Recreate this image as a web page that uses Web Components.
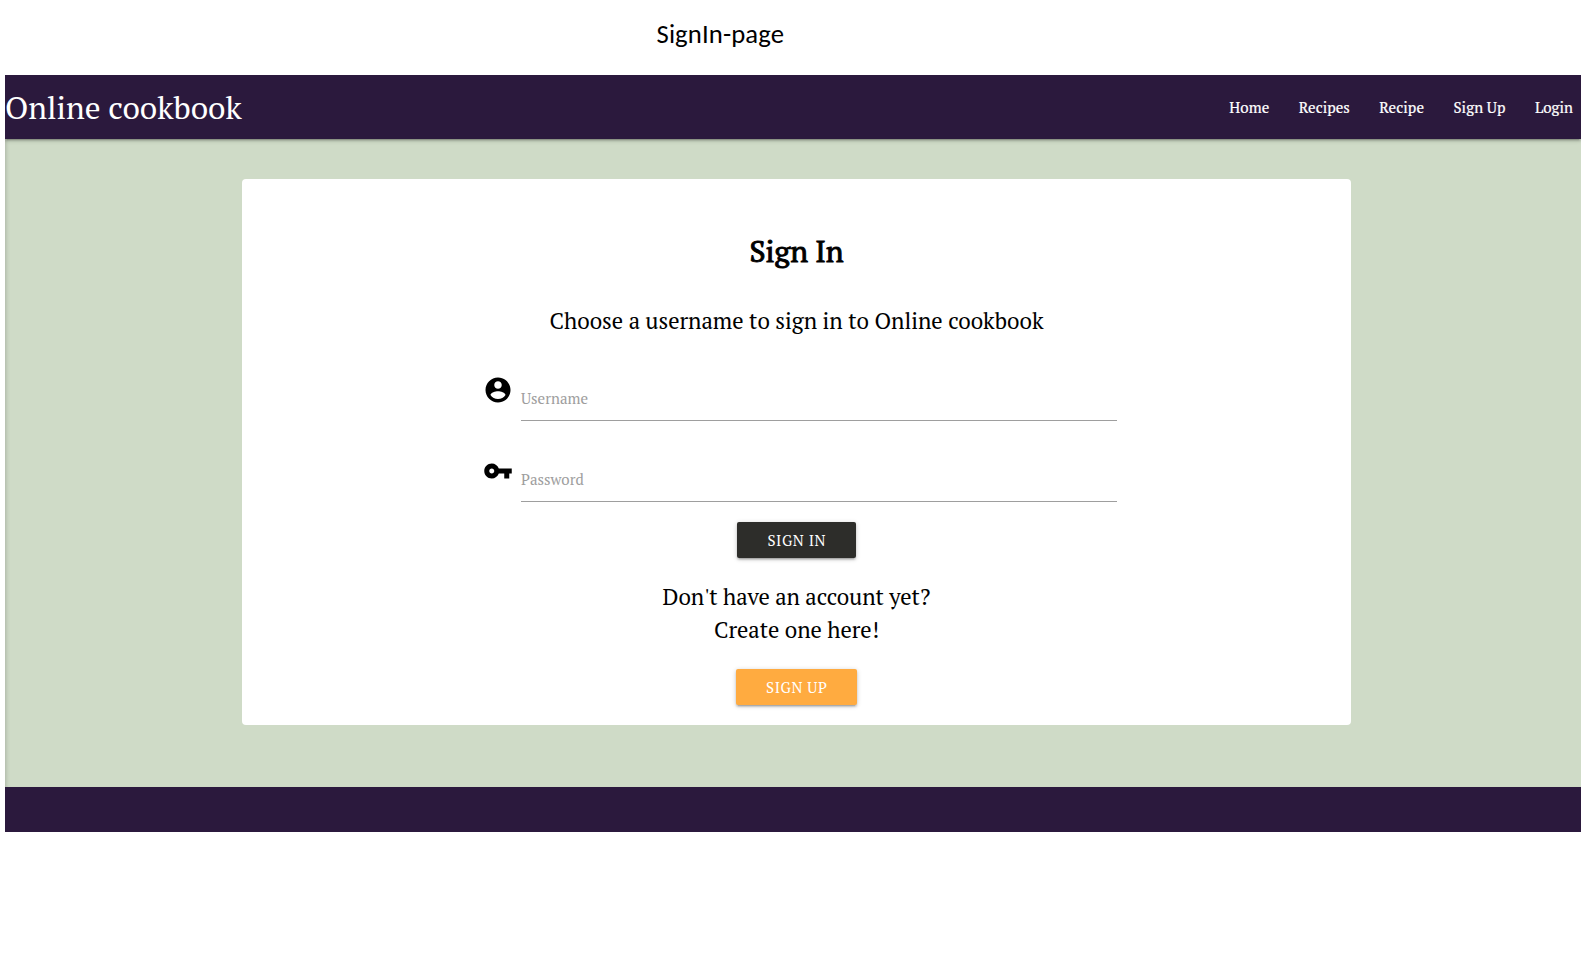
<!DOCTYPE html>
<html lang="en">
<head>
<meta charset="utf-8">
<title>Online cookbook</title>
<style>
body{margin:0;background:#fff;color:#000;font-family:"PT Serif","Liberation Serif",serif;width:1590px;height:971px;overflow:hidden}
</style>
</head>
<body>
<cookbook-page></cookbook-page>
<script>
const define=(name,html,init)=>customElements.define(name,class extends HTMLElement{
  constructor(){super();this.attachShadow({mode:'open'}).innerHTML=html;}
  connectedCallback(){if(init)init.call(this);}
});

/* Text tracked out or in so that it spans the given width */
define('fit-text','<style>:host{display:inline-block;white-space:nowrap}span{display:inline-block}</style><span><slot></slot></span>',function(){
  const s=this.shadowRoot.querySelector('span'),w=+this.getAttribute('w'),n=this.textContent.length;
  const gap=(w-s.getBoundingClientRect().width)/(n-1);
  s.style.letterSpacing=gap+'px';
  s.style.marginRight=-gap+'px';
});

define('nav-bar',`<style>
:host{display:flex;justify-content:space-between;align-items:center;height:64px;background:#2b193d;color:#fff;position:relative;z-index:1;box-shadow:0 2px 2px 0 rgba(0,0,0,.14),0 3px 1px -2px rgba(0,0,0,.12),0 1px 5px 0 rgba(0,0,0,.2);clip-path:inset(0 0 -10px 0)}
.brand{font-size:31.5px;line-height:63px}
nav{display:flex;gap:29.5px;font-size:15px;line-height:64px;padding-right:8px;-webkit-text-stroke:.2px #fff}
</style>
<div class="brand"><fit-text w="236.800">Online cookbook</fit-text></div>
<nav><fit-text w="40">Home</fit-text><fit-text w="51">Recipes</fit-text><fit-text w="44.700">Recipe</fit-text><fit-text w="52">Sign Up</fit-text><fit-text w="38">Login</fit-text></nav>`);

define('input-field',`<style>
:host{display:grid;grid-template-columns:38px 596px;width:634px;height:45px}
::slotted(svg){width:30px;height:30px;margin:-1px 0 0 .3px;display:block}
.line{border-bottom:1px solid #9e9e9e;color:#9e9e9e;font-size:15px;line-height:45px;height:44px}
</style><slot name="icon"></slot><div class="line"><slot></slot></div>`);

define('raised-button',`<style>
:host{display:flex;justify-content:center;height:36px;line-height:37px;border-radius:2px;color:#fff;font-size:15px;box-shadow:0 2px 2px 0 rgba(0,0,0,.14),0 3px 1px -2px rgba(0,0,0,.12),0 1px 5px 0 rgba(0,0,0,.2)}
</style><slot></slot>`);

define('sign-in-card',`<style>
:host{display:flex;flex-direction:column;align-items:center;box-sizing:border-box;width:1109px;height:546px;padding-top:52px;background:#fff;border-radius:4px}
h1{margin:0;font-size:30px;line-height:40px;font-weight:400;-webkit-text-stroke:.9px #000}
p{margin:0;font-size:22.5px;line-height:33px;text-align:center}
.intro{margin-top:33px;line-height:34px}
input-field{align-self:flex-start;margin-left:241px}
.user{margin-top:38px}.pass{margin-top:36px}
.in{margin-top:20px;width:119px;background:#2d2d2a}
.ask{margin-top:22px}
.up{margin-top:23px;width:121px;background:#ffab40}
</style>
<h1><fit-text w="94">Sign In</fit-text></h1>
<p class="intro"><fit-text w="494">Choose a username to sign in to Online cookbook</fit-text></p>
<input-field class="user"><svg slot="icon" viewBox="0 0 24 24"><path d="M12 2C6.480 2 2 6.480 2 12s4.480 10 10 10 10-4.480 10-10S17.520 2 12 2zm0 3c1.660 0 3 1.340 3 3s-1.340 3-3 3-3-1.340-3-3 1.340-3 3-3zm0 14.200c-2.500 0-4.710-1.280-6-3.220.030-1.990 4-3.080 6-3.080 1.990 0 5.970 1.090 6 3.080-1.290 1.940-3.500 3.220-6 3.220z"/></svg><fit-text w="67">Username</fit-text></input-field>
<input-field class="pass"><svg slot="icon" viewBox="0 0 24 24"><path d="M12.650 10C11.830 7.670 9.610 6 7 6c-3.310 0-6 2.690-6 6s2.690 6 6 6c2.610 0 4.830-1.670 5.650-4H17v4h4v-4h2v-4H12.650zM7 14c-1.100 0-2-.9-2-2s.9-2 2-2 2 .9 2 2-.9 2-2 2z"/></svg><fit-text w="62.800">Password</fit-text></input-field>
<raised-button class="in"><fit-text w="58">SIGN IN</fit-text></raised-button>
<p class="ask"><fit-text w="268">Don't have an account yet?</fit-text><br><fit-text w="165">Create one here!</fit-text></p>
<raised-button class="up"><fit-text w="61">SIGN UP</fit-text></raised-button>`);

define('page-footer','<style>:host{display:block;height:45px;background:#2b193d}</style>');

define('cookbook-page',`<style>
:host{display:block}
header{height:75px;padding-left:656.5px;font:26.700px/69px Carlito,Lato,sans-serif}
.site{width:1576px;margin-left:5px}
main{box-sizing:border-box;height:648px;padding:40px 0 0 237px;background:#cfdbc7;box-shadow:inset 4px 0 4px -3px rgba(0,0,0,.18)}
</style>
<header><fit-text w="127.500">SignIn-page</fit-text></header>
<div class="site"><nav-bar></nav-bar><main><sign-in-card></sign-in-card></main><page-footer></page-footer></div>`);
</script>
</body>
</html>
